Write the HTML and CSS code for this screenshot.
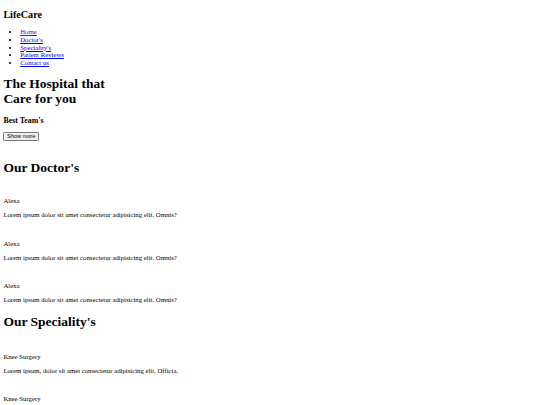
FILE: index.html
```html
<!DOCTYPE html>
<html lang="en">
<head>
<meta charset="utf-8">
<title>LifeCare</title>
<link rel="stylesheet" href="styles.css">
</head>
<body class="site">
<nav class="nav">
  <h1 class="logo">LifeCare</h1>
  <ul class="menu">
    <li><a class="link link-visited" href="#">Home</a></li>
    <li><a class="link" href="#doctors">Doctor's</a></li>
    <li><a class="link" href="#speciality">Speciality's</a></li>
    <li><a class="link" href="#reviews">Patient Reviews</a></li>
    <li><a class="link" href="#contact">Contact us</a></li>
  </ul>
</nav>
<section class="hero">
  <h1 class="hero-title">The Hospital that Care for you</h1>
  <h3 class="hero-sub">Best Team's</h3>
  <div class="hero-actions"><button class="btn" type="button">Show more</button></div>
  <div class="spacer spacer-hero"></div>
</section>
<section class="section" id="doctors">
  <h1 class="section-title">Our Doctor's</h1>
  <div class="card">
    <div class="spacer"></div>
    <p class="text">Alexa</p>
    <p class="text">Lorem ipsum dolor sit amet consectetur adipisicing elit. Omnis?</p>
  </div>
  <div class="card">
    <div class="spacer"></div>
    <p class="text">Alexa</p>
    <p class="text">Lorem ipsum dolor sit amet consectetur adipisicing elit. Omnis?</p>
  </div>
  <div class="card">
    <div class="spacer"></div>
    <p class="text">Alexa</p>
    <p class="text">Lorem ipsum dolor sit amet consectetur adipisicing elit. Omnis?</p>
  </div>
</section>
<section class="section section-spec" id="speciality">
  <h1 class="section-title">Our Speciality's</h1>
  <div class="card">
    <div class="spacer"></div>
    <p class="text">Knee Surgery</p>
    <p class="text">Lorem ipsum, dolor sit amet consectetur adipisicing elit. Officia.</p>
  </div>
  <div class="card">
    <div class="spacer"></div>
    <p class="text">Knee Surgery</p>
    <p class="text">Lorem ipsum, dolor sit amet consectetur adipisicing elit. Officia.</p>
  </div>
</section>
</body>
</html>
```
FILE: styles.css
```css
html {
  background: #ffffff;
}

.site {
  margin: 3.375px;
  font-family: "Liberation Serif", "Times New Roman", serif;
  font-size: 6.75px;
  line-height: 7.6px;
  color: #000000;
  background: #ffffff;
}

.logo {
  font-size: 10.125px;
  line-height: 11.64px;
  font-weight: bold;
  margin: 6px 0 7px;
}

.menu {
  margin: 6.75px 0;
  padding-left: 16.875px;
  list-style: disc;
  line-height: 7.76px;
}

.link {
  color: #0000ee;
  text-decoration: underline;
}

.link-visited {
  color: #551a8b;
}

.hero-title {
  font-size: 13.5px;
  line-height: 15.525px;
  font-weight: bold;
  margin: 9.045px 0;
  width: 118px;
}

.hero-sub {
  font-size: 7.9px;
  line-height: 9.08px;
  font-weight: bold;
  margin: 7px 0;
}

.hero-actions {
  line-height: 0;
}

.btn {
  font-family: "Liberation Sans", Arial, sans-serif;
  font-size: 5.625px;
  line-height: 6.5px;
  height: 8.9px;
  padding: 0 2.6px;
  margin: 0;
  color: #000000;
  background: #efefef;
  border: 0.6px solid #767676;
  border-radius: 1.3px;
}

.spacer {
  height: 8px;
}

.spacer-hero {
  height: 10px;
}

.section-title {
  font-size: 13.5px;
  line-height: 15.525px;
  font-weight: bold;
  margin: 9.045px 0 7px;
}

.section-spec .section-title {
  margin: 10px 0;
}

.section-spec .spacer {
  height: 7px;
}

.text {
  margin: 6.5px 0;
}
```
